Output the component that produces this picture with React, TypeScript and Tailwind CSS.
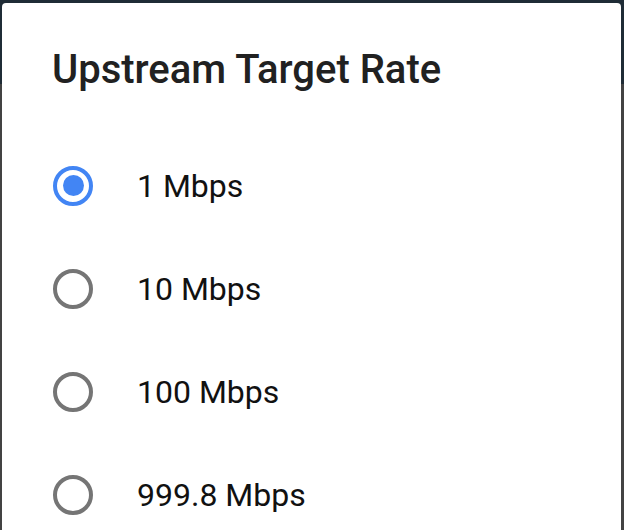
import { useState } from "react";

const OPTIONS = ["1 Mbps", "10 Mbps", "100 Mbps", "999.8 Mbps"];

function Radio({ checked }: { checked: boolean }) {
  return (
    <span
      className={`flex h-[40px] w-[40px] shrink-0 items-center justify-center rounded-full border-[4px] ${
        checked ? "border-[#4285f4]" : "border-[#757575]"
      }`}
    >
      {checked && <span className="h-[21px] w-[21px] rounded-full bg-[#4285f4]" />}
    </span>
  );
}

export default function App() {
  const [value, setValue] = useState(0);

  return (
    <div className="h-[530px] w-[624px] overflow-hidden bg-[linear-gradient(to_bottom,#1f2c36_0px,#1f2c36_84px,#434343_84px)] pl-[2px] pr-[3px] pt-[3px] font-['Roboto',sans-serif]">
      <div className="h-full rounded-t-[4px] bg-white">
        <h2 className="pl-[50px] pt-[43px] text-[40px] font-medium leading-[48px] text-[#212121]">
          Upstream Target Rate
        </h2>
        <div className="mt-[40px] flex flex-col">
          {OPTIONS.map((o, i) => (
            <button
              key={o}
              onClick={() => setValue(i)}
              className="flex h-[103px] items-center pl-[51px] text-left"
            >
              <Radio checked={value === i} />
              <span className="ml-[44px] text-[32px] text-[#111]">{o}</span>
            </button>
          ))}
        </div>
      </div>
    </div>
  );
}
